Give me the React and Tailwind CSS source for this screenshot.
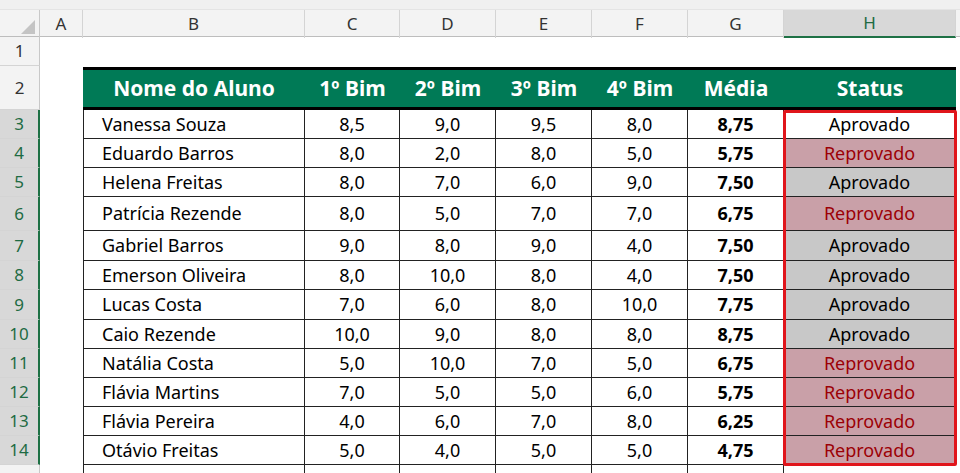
import React from "react";

const cols = "grid grid-cols-[40px_43px_222px_95px_96px_96px_96px_96px_172px_1fr]";

const data = [
  ["Vanessa Souza", "8,5", "9,0", "9,5", "8,0", "8,75", "Aprovado", "h-[29px]", "w"],
  ["Eduardo Barros", "8,0", "2,0", "8,0", "5,0", "5,75", "Reprovado", "h-[29px]"],
  ["Helena Freitas", "8,0", "7,0", "6,0", "9,0", "7,50", "Aprovado", "h-[29px]"],
  ["Patrícia Rezende", "8,0", "5,0", "7,0", "7,0", "6,75", "Reprovado", "h-[34px]"],
  ["Gabriel Barros", "9,0", "8,0", "9,0", "4,0", "7,50", "Aprovado", "h-[30px]"],
  ["Emerson Oliveira", "8,0", "10,0", "8,0", "4,0", "7,50", "Aprovado", "h-[29px]"],
  ["Lucas Costa", "7,0", "6,0", "8,0", "10,0", "7,75", "Aprovado", "h-[30px]"],
  ["Caio Rezende", "10,0", "9,0", "8,0", "8,0", "8,75", "Aprovado", "h-[29px]"],
  ["Natália Costa", "5,0", "10,0", "7,0", "5,0", "6,75", "Reprovado", "h-[29px]"],
  ["Flávia Martins", "7,0", "5,0", "5,0", "6,0", "5,75", "Reprovado", "h-[29px]"],
  ["Flávia Pereira", "4,0", "6,0", "7,0", "8,0", "6,25", "Reprovado", "h-[29px]"],
  ["Otávio Freitas", "5,0", "4,0", "5,0", "5,0", "4,75", "Reprovado", "h-[29px]"],
];

const RowNum = ({ n, sel }) => (
  <div
    className={`flex items-center justify-center border-b border-[#d4d4d4] text-[17px] ${
      sel ? "bg-[#d8d8d8] text-[#1e6b43] border-r-2 border-r-[#1e7145]" : "bg-[#f3f3f3] text-[#333] border-r border-r-[#c8c8c8]"
    }`}
  >
    {n}
  </div>
);

export default function App() {
  const letters = ["A", "B", "C", "D", "E", "F", "G", "H"];
  return (
    <div className="w-[960px] h-[473px] overflow-hidden bg-white font-['Liberation_Sans',sans-serif] text-[18px] text-black">
      <div className="h-[10px] bg-[#f0f0f0] border-b border-[#e4e4e4]" />
      <div className={`${cols} h-[27px] bg-[#f3f3f3] border-b border-[#bdbdbd]`}>
        <div className="border-r border-[#c8c8c8] flex items-end justify-end p-1">
          <div className="w-0 h-0 border-l-[14px] border-l-transparent border-b-[14px] border-b-[#c4c4c4]" />
        </div>
        {letters.map((l) => (
          <div
            key={l}
            className={`flex items-center justify-center text-[17px] border-r border-[#d4d4d4] ${
              l === "H" ? "bg-[#d8d8d8] text-[#1e6b43] border-b-2 border-b-[#1e7145]" : "text-[#333]"
            }`}
          >
            {l}
          </div>
        ))}
        <div />
      </div>
      <div className={`${cols} h-[29px]`}>
        <RowNum n={1} />
      </div>
      <div className={`${cols} h-[44px]`}>
        <RowNum n={2} />
        <div />
        <div className="col-span-7 mt-[1px] bg-[#007a56] border-t-[3px] border-b-[3px] border-black grid grid-cols-[222px_95px_96px_96px_96px_96px_172px] text-white font-bold text-[21px] font-['Open_Sans',sans-serif]">
          {["Nome do Aluno", "1º Bim", "2º Bim", "3º Bim", "4º Bim", "Média", "Status"].map((h) => (
            <div key={h} className="flex items-center justify-center">{h}</div>
          ))}
        </div>
      </div>
      <div className="relative">
        {data.map((r, i) => {
          const rep = r[6] === "Reprovado";
          return (
            <div key={i} className={`${cols} ${r[7]}`}>
              <RowNum n={i + 3} sel />
              <div />
              <div className="flex items-center pl-[18px] border-l border-b border-r border-[#222]">{r[0]}</div>
              {r.slice(1, 5).map((v, j) => (
                <div key={j} className="flex items-center justify-center border-b border-r border-[#222]">{v}</div>
              ))}
              <div className="flex items-center justify-center border-b border-r border-[#222] font-bold">{r[5]}</div>
              <div
                className={`flex items-center justify-center border-b border-r border-[#222] ${
                  rep ? "bg-[#c9a0a8] text-[#9c0006]" : r[8] ? "bg-white" : "bg-[#c8c8c8]"
                }`}
              >
                {r[6]}
              </div>
              <div />
            </div>
          );
        })}
        <div className={`${cols} h-[20px]`}>
          <div className="bg-[#f3f3f3] border-r border-[#c8c8c8]" />
          <div />
          <div className="border-l border-r border-[#222]" />
          <div className="border-r border-[#222]" />
          <div className="border-r border-[#222]" />
          <div className="border-r border-[#222]" />
          <div className="border-r border-[#222]" />
          <div className="border-r border-[#222]" />
        </div>
        <div className="absolute left-[783px] top-0 w-[174px] h-[356px] border-[3px] border-[#e0151b] rounded-[2px]" />
      </div>
    </div>
  );
}
